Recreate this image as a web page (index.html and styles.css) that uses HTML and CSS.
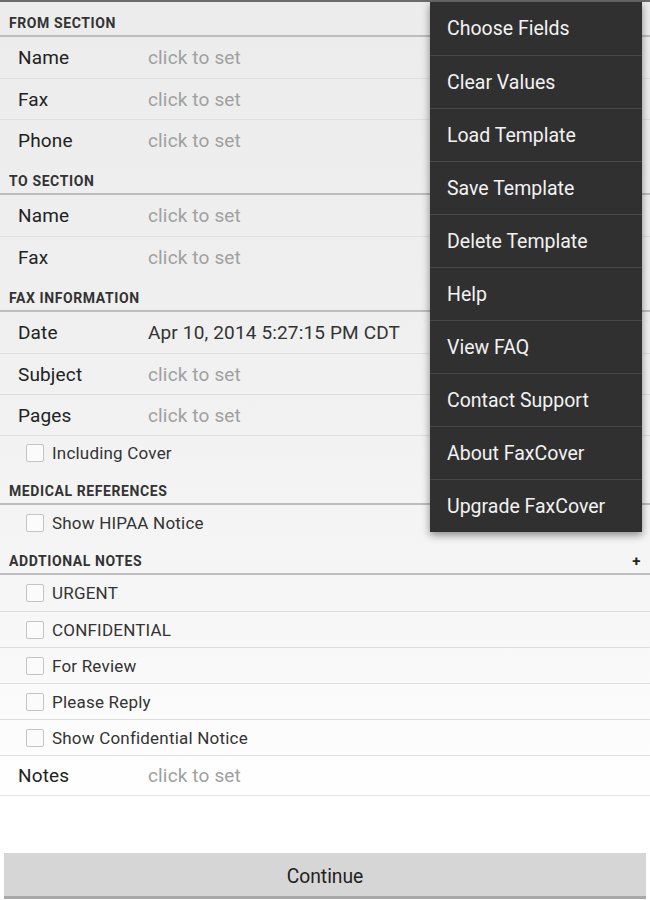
FILE: index.html
```html
<!DOCTYPE html>
<html>
<head>
<meta charset="utf-8">
<link rel="stylesheet" href="styles.css">
</head>
<body>
<div class="topline"></div>
<div class="screen">
  <div class="form">
    <div class="section-head">FROM SECTION</div>
    <div class="row"><span class="label">Name</span><span class="value">click to set</span></div>
    <div class="row"><span class="label">Fax</span><span class="value">click to set</span></div>
    <div class="row"><span class="label">Phone</span><span class="value">click to set</span></div>

    <div class="section-head">TO SECTION</div>
    <div class="row"><span class="label">Name</span><span class="value">click to set</span></div>
    <div class="row"><span class="label">Fax</span><span class="value">click to set</span></div>

    <div class="section-head">FAX INFORMATION</div>
    <div class="row"><span class="label">Date</span><span class="value set">Apr 10, 2014 5:27:15 PM CDT</span></div>
    <div class="row"><span class="label">Subject</span><span class="value">click to set</span></div>
    <div class="row"><span class="label">Pages</span><span class="value">click to set</span></div>
    <div class="row check short"><span class="box"></span><span class="check-label">Including Cover</span></div>

    <div class="section-head">MEDICAL REFERENCES</div>
    <div class="row check short"><span class="box"></span><span class="check-label">Show HIPAA Notice</span></div>

    <div class="section-head">ADDTIONAL NOTES<span class="add">+</span></div>
    <div class="row check"><span class="box"></span><span class="check-label">URGENT</span></div>
    <div class="row check"><span class="box"></span><span class="check-label">CONFIDENTIAL</span></div>
    <div class="row check"><span class="box"></span><span class="check-label">For Review</span></div>
    <div class="row check"><span class="box"></span><span class="check-label">Please Reply</span></div>
    <div class="row check"><span class="box"></span><span class="check-label">Show Confidential Notice</span></div>
    <div class="row notes"><span class="label">Notes</span><span class="value">click to set</span></div>
  </div>
  <div class="footer">
    <button class="continue">Continue</button>
  </div>
</div>

<ul class="menu">
  <li>Choose Fields</li>
  <li>Clear Values</li>
  <li>Load Template</li>
  <li>Save Template</li>
  <li>Delete Template</li>
  <li>Help</li>
  <li>View FAQ</li>
  <li>Contact Support</li>
  <li>About FaxCover</li>
  <li>Upgrade FaxCover</li>
</ul>
</body>
</html>
```

FILE: styles.css
```css
* { box-sizing: border-box; }

html, body {
  margin: 0;
  padding: 0;
}

body {
  width: 650px;
  height: 900px;
  overflow: hidden;
  position: relative;
  font-family: Roboto, "Liberation Sans", sans-serif;
  background: linear-gradient(to bottom, #ececec 0px, #efefef 300px, #f6f6f6 600px, #ffffff 800px);
  color: #222;
}

.topline {
  height: 2px;
  background: #6a6a6a;
}

.screen {
  height: 898px;
  display: flex;
  flex-direction: column;
}

.form {
  display: flex;
  flex-direction: column;
}

.section-head {
  height: 35px;
  padding: 13px 0 0 9px;
  font-size: 14px;
  letter-spacing: 0.6px;
  font-weight: bold;
  color: #333;
  border-bottom: 2px solid #bdbdbd;
  line-height: 16px;
  display: flex;
  justify-content: space-between;
}

.section-head .add {
  margin-right: 9px;
  font-size: 15px;
  font-weight: bold;
  color: #222;
}

.row {
  height: 41px;
  display: flex;
  align-items: center;
  padding-left: 18px;
  font-size: 19px;
  letter-spacing: 0.15px;
}

.row + .row {
  border-top: 1px solid #dedede;
}

.label {
  width: 130px;
  color: #222;
}

.value {
  color: #a0a0a0;
}

.value.set {
  color: #333;
}

.row.check {
  height: 36px;
  padding-left: 26px;
  font-size: 17px;
  letter-spacing: 0.2px;
}

.row.check.short {
  height: 35px;
}

.box {
  width: 18px;
  height: 18px;
  border: 1px solid #c4c4c4;
  border-radius: 2px;
  background: #fbfbfb;
  margin-right: 8px;
}

.check-label {
  color: #333;
}

.row.notes {
  height: 41px;
  border-bottom: 1px solid #e6e6e6;
}

.footer {
  flex: 1;
  display: flex;
  align-items: flex-end;
  padding: 0 4px 1px 4px;
}

.continue {
  width: 100%;
  height: 46px;
  border: none;
  border-bottom: 3px solid #a8a8a8;
  background: #d6d6d6;
  font-family: Roboto, "Liberation Sans", sans-serif;
  font-size: 19.3px;
  color: #222;
  padding: 3px 0 0 0;
}

.menu {
  position: absolute;
  top: 2px;
  left: 430px;
  width: 212px;
  margin: 0;
  padding: 0;
  list-style: none;
  background: #303030;
  box-shadow: 0 3px 8px rgba(0, 0, 0, 0.45);
}

.menu li {
  height: 53px;
  display: flex;
  align-items: center;
  padding-left: 17px;
  font-size: 19.5px;
  color: #f2f2f2;
}

.menu li + li {
  border-top: 1px solid #474747;
}
```
